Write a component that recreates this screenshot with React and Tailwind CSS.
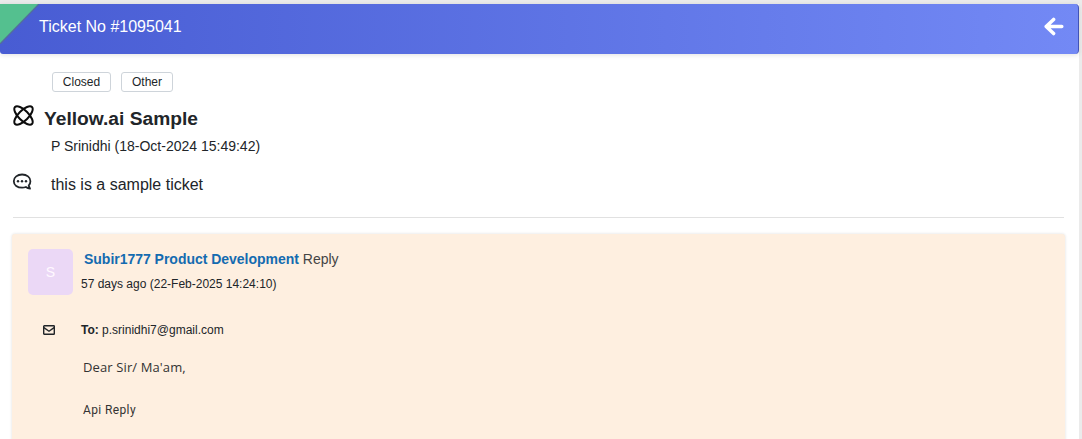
function ArrowLeftIcon() {
  return (
    <svg
      className="mt-[13px] mr-[14px]"
      width="20"
      height="20"
      viewBox="0 0 20 20"
      fill="none"
      stroke="#ffffff"
      strokeWidth="3.5"
      strokeLinecap="round"
      strokeLinejoin="round"
    >
      <path d="M9.6 2.4L2.2 9.5L9.6 16.6M3 9.5H17.8" />
    </svg>
  );
}

function EnvelopeIcon() {
  return (
    <svg className="ml-[15px] -mt-px" width="12" height="10" viewBox="0 0 12 10" fill="none" stroke="#212529" strokeWidth="1.4">
      <rect x="0.7" y="0.7" width="10.6" height="8.6" rx="0.6" />
      <path d="M0.9 2.6L6 6.2L11.1 2.6" />
    </svg>
  );
}

function OrbitIcon() {
  return (
    <svg width="22" height="22" viewBox="0 0 22 22" fill="none" stroke="#0c0c0c" strokeWidth="2">
      <ellipse cx="11.5" cy="10.5" rx="12" ry="5" transform="rotate(45 11.5 10.5)" />
      <ellipse cx="11.5" cy="10.5" rx="12" ry="5" transform="rotate(-45 11.5 10.5)" />
    </svg>
  );
}

function ChatIcon() {
  return (
    <svg width="20" height="18" viewBox="0 0 20 18" fill="none" stroke="#212529" strokeWidth="1.8" strokeLinejoin="round">
      <path d="M18 15.7 L16.7 12.6 C17.9 11.3 18.4 9.6 18.4 8.2 C18.4 4.2 14.8 1.5 10.1 1.5 C5.4 1.5 1.8 4.2 1.8 8.2 C1.8 12.2 5.4 14.7 10.1 14.7 C11.4 14.7 12.7 14.5 13.9 14 C15.1 15 16.6 15.6 18 15.7 Z" />
      <g fill="#212529" stroke="none">
        <circle cx="6" cy="8.3" r="1.2" />
        <circle cx="10" cy="8.3" r="1.2" />
        <circle cx="14" cy="8.3" r="1.2" />
      </g>
    </svg>
  );
}

function Tag({ className, children }) {
  return (
    <span className={`flex h-5 items-center justify-center rounded-[3px] border border-[#ced4da] bg-white text-xs text-[#212529] ${className}`}>
      {children}
    </span>
  );
}

function Header() {
  return (
    <header className="flex h-[50px] w-[1079px] justify-between overflow-hidden rounded-r-[4px] rounded-bl-[3px] border-r border-[#4254b8] bg-linear-to-r from-[#485cd3] to-[#7389f5] shadow-[0_1px_5px_rgba(0,0,0,0.12)]">
      <div className="flex">
        <svg width="39" height="40" viewBox="0 0 39 40">
          <path d="M0 0H39L0 40Z" fill="#54c08f" />
          <path d="M39 0L0 40" stroke="#536e9e" strokeWidth="1.4" />
        </svg>
        <h1 className="pt-[11px] text-base leading-6 text-white">Ticket No #1095041</h1>
      </div>
      <ArrowLeftIcon />
    </header>
  );
}

function Reply() {
  return (
    <article className="mr-[14px] ml-3 mt-4 h-[220px] rounded-[3px] bg-[#feefe0] pt-[15px] pl-4 shadow-[0_0_3px_rgba(0,0,0,0.14)]">
      <div className="flex h-[46px]">
        <div className="flex h-[46px] w-[45px] items-center justify-center rounded-[5px] bg-[#ebd8f6] text-sm text-[#fff8ff]">S</div>
        <div className="pl-2">
          <p className="pl-[3px] text-sm leading-[21px] text-[#444]">
            <b className="tracking-[-0.02px] text-[#146bb0]">Subir1777 Product Development</b> Reply
          </p>
          <p className="mt-[5px] text-xs leading-[18px] text-[#212529]">57 days ago (22-Feb-2025 14:24:10)</p>
        </div>
      </div>
      <div className="mt-[26px] flex h-[18px] items-center text-[#212529]">
        <EnvelopeIcon />
        <p className="ml-[26px] text-xs leading-[18px]"><b>To:</b> p.srinidhi7@gmail.com</p>
      </div>
      <p className="mt-[18px] ml-[55px] font-['Open_Sans',sans-serif] text-[13px] leading-5 tracking-[0.12px] text-[#333]">Dear Sir/ Ma'am,</p>
      <p className="mt-6 ml-[55px] font-[Roboto,sans-serif] text-xs leading-[18px] tracking-[0.38px] text-[#333]">Api Reply</p>
    </article>
  );
}

export default function App() {
  return (
    <div className="h-[439px] w-[1082px] overflow-hidden bg-[#ebebeb] pt-1 font-['Liberation_Sans',Arial,sans-serif]">
      <main className="h-[435px] w-[1079px] bg-white">
        <Header />
        <div className="flex gap-[10px] pt-[18px] pl-[52px]">
          <Tag className="w-[59px]">Closed</Tag>
          <Tag className="w-[52px]">Other</Tag>
        </div>
        <div className="mt-[13px] flex h-7 pl-3">
          <OrbitIcon />
          <h2 className="ml-[10px] pt-[2px] text-[19.2px] leading-6 font-bold text-[#212529]">Yellow.ai Sample</h2>
        </div>
        <p className="mt-[3px] pl-[51px] text-sm leading-[21px] text-[#212529]">P Srinidhi (18-Oct-2024 15:49:42)</p>
        <div className="mt-4 flex h-6 items-start pl-3">
          <ChatIcon />
          <p className="ml-[19px] text-base leading-6 text-[#212529]">this is a sample ticket</p>
        </div>
        <hr className="mt-5 mr-[15px] ml-[13px] border-[#e1e1e1]" />
        <Reply />
      </main>
    </div>
  );
}
